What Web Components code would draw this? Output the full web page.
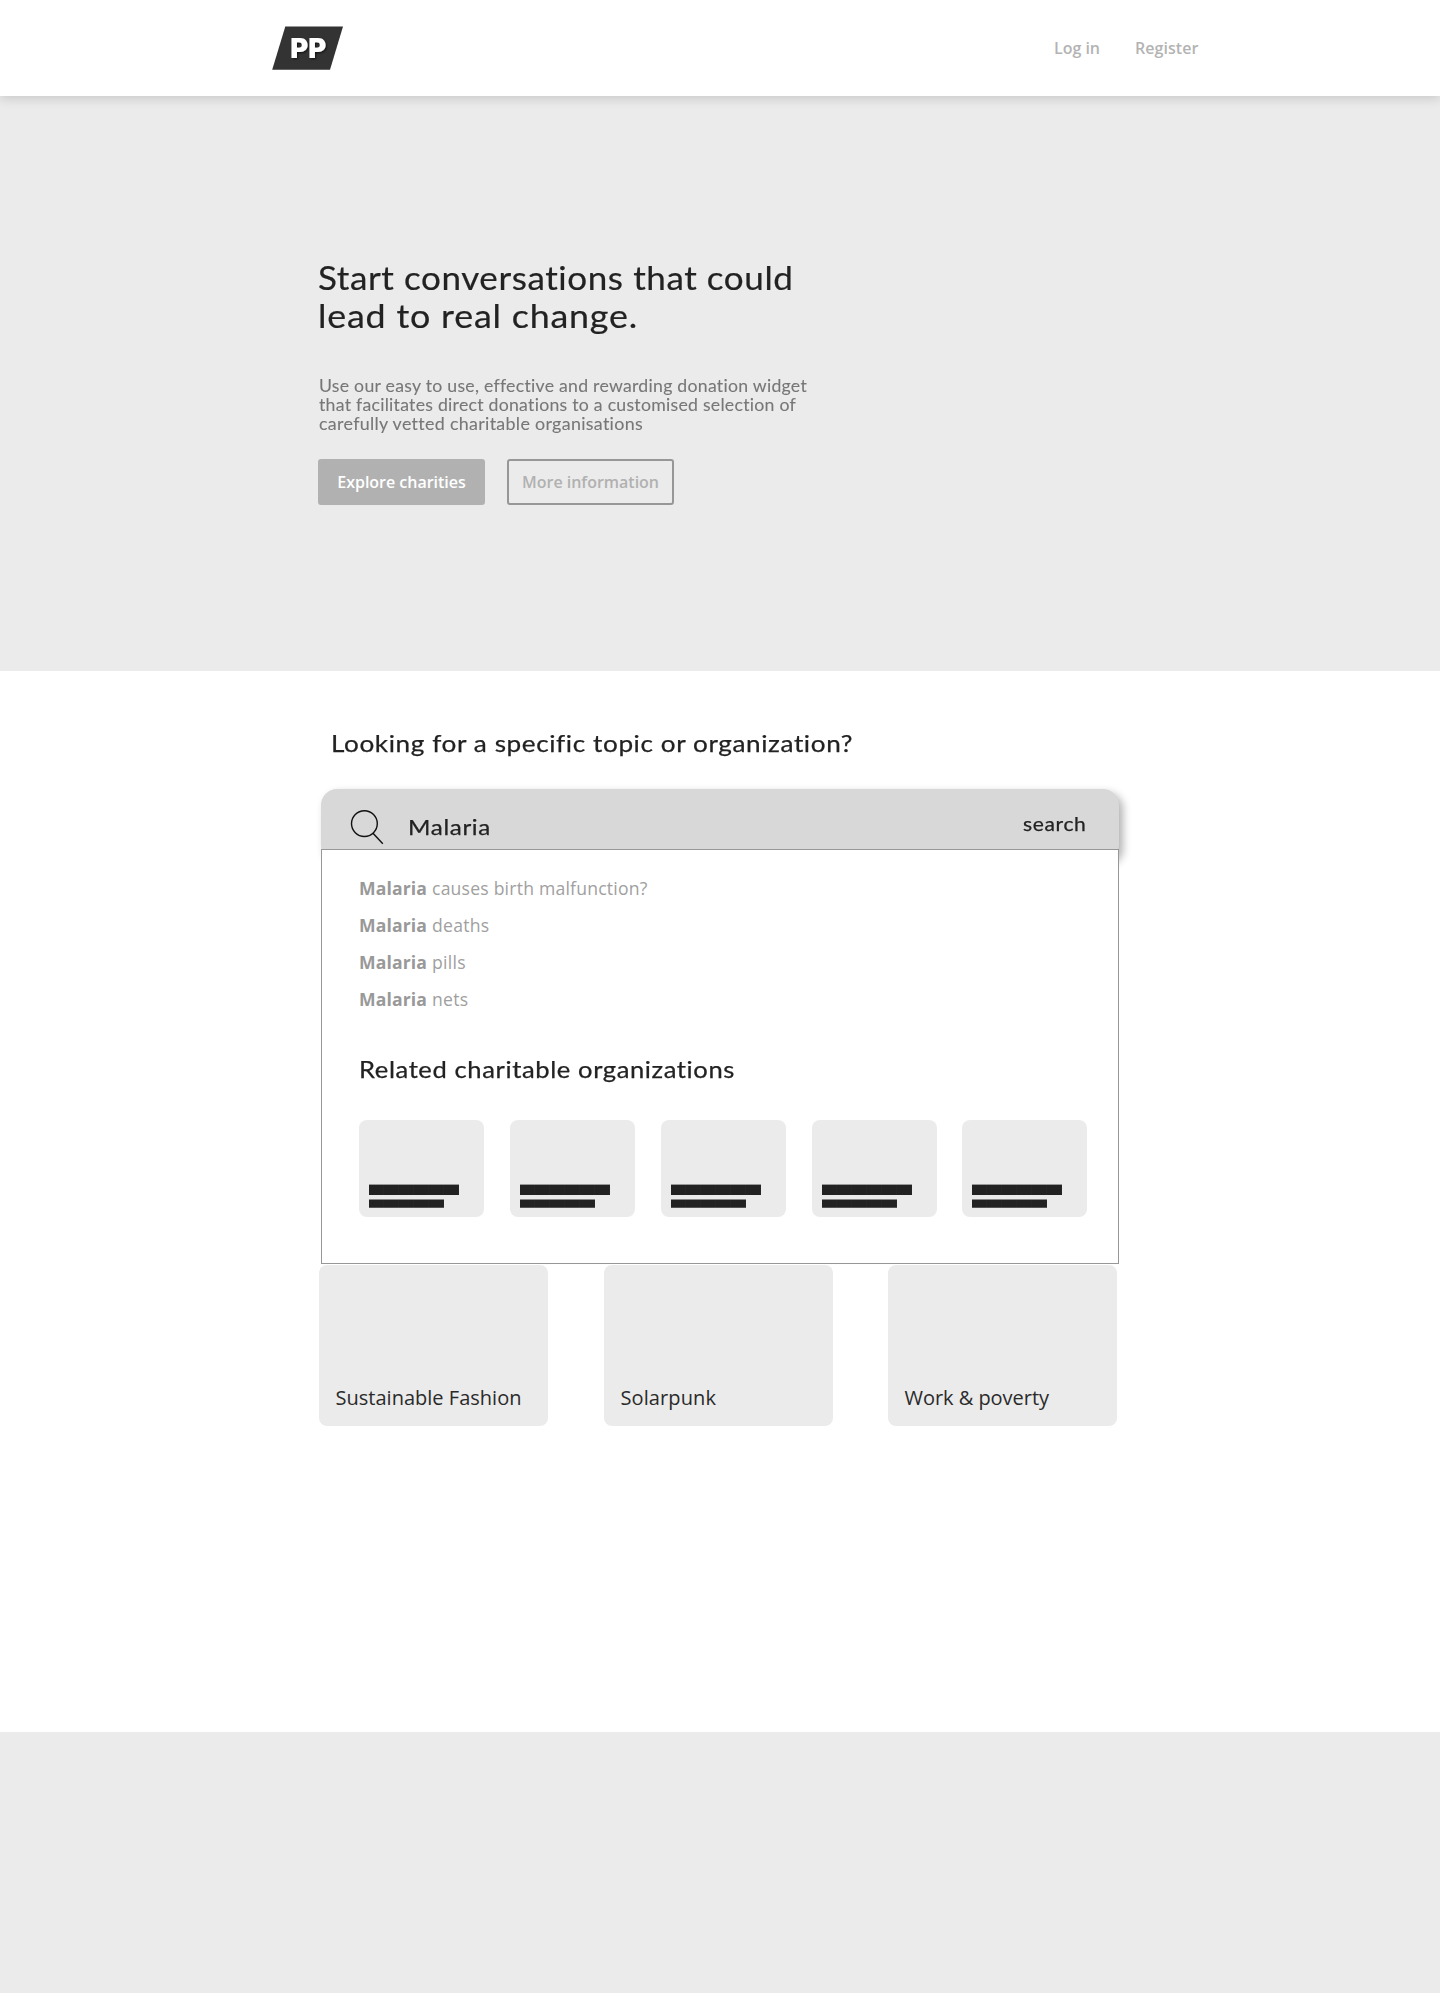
<!DOCTYPE html>
<html lang="en">
<head>
<meta charset="utf-8">
<title>PP</title>
<style>
html,body{margin:0;padding:0;background:#fff}
body{width:1440px;height:1993px;overflow:hidden;font-family:"Open Sans","Noto Sans",sans-serif}
</style>
</head>
<body>
<pp-app></pp-app>
<script>
const define = (name, html, ready) => {
  const tpl = document.createElement('template');
  tpl.innerHTML = html;
  customElements.define(name, class extends HTMLElement {
    connectedCallback() {
      if (this.shadowRoot) return;
      this.attachShadow({mode: 'open'}).append(tpl.content.cloneNode(true));
      if (ready) ready(this);
    }
  });
};

/* One line of text that fills the given measure: tracked, and also widened when "wide" is set. */
define('fit-line', `
<style>:host{display:block;white-space:nowrap;font-variant-ligatures:none}span{display:inline-block;transform-origin:0 50%}</style>
<span><slot></slot></span>`, el => {
  const span = el.shadowRoot.querySelector('span');
  const target = parseFloat(el.getAttribute('measure'));
  const natural = span.getBoundingClientRect().width;
  let tracked = target;
  if (el.hasAttribute('wide')) {
    const scale = 1 + (target / natural - 1) * .6;
    tracked = target / scale;
    span.style.transform = 'scaleX(' + scale.toFixed(4) + ')';
    el.style.width = target + 'px';
  }
  span.style.letterSpacing = ((tracked - natural) / el.textContent.length).toFixed(3) + 'px';
});

define('pp-logo', `
<style>:host{display:block;width:72px;height:44px}svg{display:block}text{font:900 27.5px Inter,Lato,sans-serif}</style>
<svg width="72" height="46" viewBox="0 0 72 46">
<defs><filter id="s" x="-20%" y="-20%" width="150%" height="150%"><feDropShadow dx="1" dy="1" stdDeviation="1" flood-color="#000" flood-opacity=".7"/></filter></defs>
<path d="M13.3.4H71L58 43.8H.2Z" fill="#333"/>
<text x="18.2" y="32.4" textLength="36" lengthAdjust="spacingAndGlyphs" fill="#fff" filter="url(#s)">PP</text></svg>`);

define('pp-header', `
<style>
:host{display:flex;height:96px;box-sizing:border-box;padding:26px 241.5px 0 272px;justify-content:space-between;background:#fff;box-shadow:0 3px 10px rgba(0,0,0,.14);position:relative;z-index:1}
nav{display:flex;gap:35px;padding-top:11px;font-weight:600;font-size:16px;line-height:22px;color:#b3b3b3}
</style>
<pp-logo></pp-logo>
<nav><fit-line measure="46">Log in</fit-line><fit-line measure="63.5">Register</fit-line></nav>`);

define('pp-button', `
<style>
:host{display:flex;width:167px;height:46px;box-sizing:border-box;justify-content:center;align-items:center;border:2px solid #b1b1b1;border-radius:3px;background:#b1b1b1;color:#fff;font-weight:600;font-size:16px;line-height:22px}
:host([outline]){background:none;border-color:#979797;color:#b1b1b1}
</style><slot></slot>`);

define('pp-hero', `
<style>
:host{display:block;height:575px;box-sizing:border-box;background:#ebebeb;padding:162px 0 0 318px;font-family:Lato,sans-serif}
h1{margin:0;font-weight:400;font-size:33px;line-height:38px;color:#222;-webkit-text-stroke:.2px #222}
p{margin:41.5px 0 26.5px .7px;font-size:16.8px;line-height:19px;color:#777;-webkit-text-stroke:.1px #777}
.actions{display:flex;gap:22px;font-family:"Open Sans",sans-serif}
</style>
<h1><fit-line wide measure="475.5">Start conversations that could</fit-line><fit-line wide measure="320">lead to real change.</fit-line></h1>
<p><fit-line wide measure="488">Use our easy to use, effective and rewarding donation widget</fit-line><fit-line wide measure="477">that facilitates direct donations to a customised selection of</fit-line><fit-line wide measure="324">carefully vetted charitable organisations</fit-line></p>
<div class="actions"><pp-button><fit-line measure="128.5">Explore charities</fit-line></pp-button><pp-button outline><fit-line measure="137">More information</fit-line></pp-button></div>`);

define('search-bar', `
<style>
:host{display:flex;width:798px;height:72px;box-sizing:border-box;margin-left:1px;padding:20px 33px 0 29px;border-radius:16px;background:#d8d8d8;box-shadow:4px 4px 8px rgba(0,0,0,.3);font-family:Lato,sans-serif;color:#222;-webkit-text-stroke:.25px #222}
svg{display:block;margin-right:23.5px}
.q{font-size:22px;line-height:28px;padding-top:4px}
.go{font-size:19px;line-height:24px;padding-top:3px;margin-left:auto}
</style>
<svg width="34" height="38" viewBox="0 0 34 38" fill="none" stroke="#111" stroke-width="1.4"><ellipse cx="14.4" cy="14.6" rx="12.9" ry="12.9"/><path d="M23 24.2 32.8 34.8"/></svg>
<fit-line class="q" wide measure="83">Malaria</fit-line><fit-line class="go" wide measure="63.5">search</fit-line>`);

define('search-hint', `
<style>:host{display:flex;gap:5px;font-size:17.6px;line-height:37px;color:#a0a0a0}b{font-weight:700;color:#999}</style>
<b><fit-line measure="68">Malaria</fit-line></b><slot></slot>`);

define('charity-tile', `
<style>
:host{display:flex;flex-direction:column;width:125px;height:97px;box-sizing:border-box;border-radius:8px;background:#ebebeb;padding:64px 0 0 9.5px;gap:4px}
i{display:block;width:90px;height:11px;background:repeating-linear-gradient(90deg,#222 0 14px,#262626 14px 15px)}
i+i{width:75px;height:9px}
i{box-shadow:inset 0 1px #999}
i+i{box-shadow:inset 0 1px #888,inset 0 -1px #555}
</style><i></i><i></i>`);

define('search-panel', `
<style>
:host{display:block;position:relative;width:798px;height:415px;box-sizing:border-box;margin:-12px 0 0 1px;border:1px solid #979797;background:#fff;padding:19.5px 0 0 37px}
h3{margin:36px 0 36px 0;font:400 23.5px/30px Lato,sans-serif;color:#222;-webkit-text-stroke:.25px #222}
.hints{margin-left:0}
.tiles{display:flex;gap:26px}
charity-tile:last-child{margin-left:-1px}
</style>
<div class="hints">
<search-hint><fit-line measure="215.5">causes birth malfunction?</fit-line></search-hint>
<search-hint><fit-line measure="57.5">deaths</fit-line></search-hint>
<search-hint><fit-line measure="34">pills</fit-line></search-hint>
<search-hint><fit-line measure="36.5">nets</fit-line></search-hint></div>
<h3><fit-line wide measure="376">Related charitable organizations</fit-line></h3>
<div class="tiles"><charity-tile></charity-tile><charity-tile></charity-tile><charity-tile></charity-tile><charity-tile></charity-tile><charity-tile></charity-tile></div>`);

define('topic-card', `
<style>:host{display:block;width:229px;height:161px;box-sizing:border-box;border-radius:8px;background:#ebebeb;padding:119px 0 0 16.5px;font-size:20px;line-height:27px;color:#2a2a2a}</style><slot></slot>`);

define('pp-search', `
<style>
:host{display:block;height:1061px;box-sizing:border-box;padding:57px 0 0 320px}
h2{margin:0 0 31px 10.5px;font:400 24px/30px Lato,sans-serif;color:#222;-webkit-text-stroke:.25px #222}
.topics{display:flex;gap:56px;margin:1px 0 0 -1px}
topic-card:last-child{margin-left:-1px}
</style>
<h2><fit-line wide measure="522">Looking for a specific topic or organization?</fit-line></h2>
<search-bar></search-bar><search-panel></search-panel>
<div class="topics"><topic-card><fit-line measure="186">Sustainable Fashion</fit-line></topic-card><topic-card><fit-line measure="95.5">Solarpunk</fit-line></topic-card><topic-card><fit-line measure="144.5">Work &amp; poverty</fit-line></topic-card></div>`);

define('pp-footer', `<style>:host{display:block;height:261px;background:#ebebeb}</style>`);

define('pp-app', `<style>:host{display:block}</style>
<pp-header></pp-header><pp-hero></pp-hero><pp-search></pp-search><pp-footer></pp-footer>`);
</script>
</body>
</html>
